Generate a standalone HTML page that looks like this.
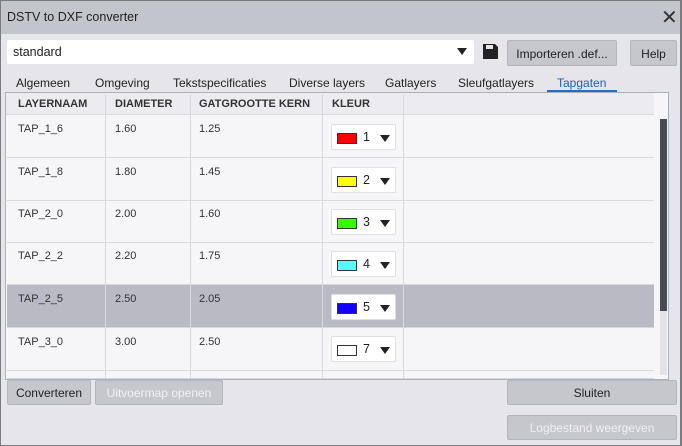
<!DOCTYPE html><html><head><style>
*{box-sizing:border-box;margin:0;padding:0}
body{width:682px;height:446px;overflow:hidden;font-family:"Liberation Sans",sans-serif;font-size:12px;color:#222;background:#7a7b80;position:relative}
.win{position:absolute;left:1px;top:1px;width:679px;height:444px;background:#e6e6ea}
.title{position:absolute;left:0;top:0;width:679px;height:33px;background:#c3c5cc}
.abs{position:absolute;white-space:nowrap}
.btn{position:absolute;background:#c6c7cd;border:1px solid #b5b6bc;border-radius:2px;text-align:center;font-size:12px;color:#222;white-space:nowrap}
.dis{color:#f0f0f2}
.th{position:absolute;top:93px;height:21px;font-size:11px;font-weight:bold;color:#333;padding-top:4px}
.row{position:absolute;left:6px;width:647px;height:43px;border-bottom:1px solid #d8d8de}
.vl{position:absolute;top:93px;height:285px;width:1px;background:#d8d8de}
.cell{position:absolute;font-size:11px;color:#333}
.sw{position:absolute;left:330px;width:65px;height:26px;background:#fff;border:1px solid #e0e0e4;border-radius:2px}
.sw i{position:absolute;left:5px;top:8px;width:20px;height:11px;border:1px solid #333}
.sw b{position:absolute;left:31px;top:5px;font-weight:normal;font-size:12.5px}
.sw s{position:absolute;left:48px;top:10px;border-left:5px solid transparent;border-right:5px solid transparent;border-top:7px solid #222}
</style></head><body><div class="win">
<div class="title"><div class="abs" style="left:6px;top:9px;font-size:12.5px">DSTV to DXF converter</div>
<div class="abs" style="left:660px;top:4px;font-size:20px;color:#333">✕</div></div>
<div class="abs" style="left:6px;top:39px;width:467px;height:24px;background:#fff;border-radius:2px"><div class="abs" style="left:6px;top:5px;font-size:12.5px">standard</div><div class="abs" style="left:450px;top:8px;border-left:5px solid transparent;border-right:5px solid transparent;border-top:7px solid #222"></div></div>
<svg class="abs" style="left:482px;top:43px" width="15" height="15" viewBox="0 0 15 15"><path d="M0 0H12L15 3V15H0Z" fill="#222"/><rect x="3" y="1" width="7" height="4" fill="#e6e6ea"/></svg>
<div class="btn" style="left:506px;top:39px;width:110px;height:26px;padding-top:6px">Importeren .def...</div>
<div class="btn" style="left:629px;top:39px;width:47px;height:26px;padding-top:6px">Help</div>
<div class="abs" style="top:75px;left:15px;font-size:12px;color:#222">
<span class="abs" style="left:0">Algemeen</span><span class="abs" style="left:79px">Omgeving</span><span class="abs" style="left:157px">Tekstspecificaties</span><span class="abs" style="left:273px">Diverse layers</span><span class="abs" style="left:369px">Gatlayers</span><span class="abs" style="left:442px">Sleufgatlayers</span><span class="abs" style="left:541px;color:#2060b0">Tapgaten</span></div>
<div class="abs" style="left:546px;top:89px;width:70px;height:2px;background:#2a6cc0"></div>
<div class="abs" style="left:4px;top:91px;width:664px;height:288px;background:#f6f6f9;border:1px solid #aab0bc"></div>
<div class="abs" style="left:5px;top:92px;width:648px;height:22px;background:#ececf0;border-bottom:1px solid #d8d8de"></div>
<div class="th" style="left:17px">LAYERNAAM</div><div class="th" style="left:114px">DIAMETER</div><div class="th" style="left:198px">GATGROOTTE KERN</div><div class="th" style="left:331px">KLEUR</div>
<div class="row" style="top:114px"></div><div class="row" style="top:157px"></div><div class="row" style="top:199px"></div><div class="row" style="top:241px"></div><div class="row" style="top:284px;background:#b9bac3"></div><div class="row" style="top:327px"></div><div class="row" style="top:370px;height:8px"></div>
<div class="vl" style="left:104px"></div><div class="vl" style="left:189px"></div><div class="vl" style="left:321px"></div><div class="vl" style="left:402px"></div>
<div class="cell" style="left:17px;top:122px">TAP_1_6</div><div class="cell" style="left:114px;top:122px">1.60</div><div class="cell" style="left:198px;top:122px">1.25</div>
<div class="cell" style="left:17px;top:165px">TAP_1_8</div><div class="cell" style="left:114px;top:165px">1.80</div><div class="cell" style="left:198px;top:165px">1.45</div>
<div class="cell" style="left:17px;top:207px">TAP_2_0</div><div class="cell" style="left:114px;top:207px">2.00</div><div class="cell" style="left:198px;top:207px">1.60</div>
<div class="cell" style="left:17px;top:249px">TAP_2_2</div><div class="cell" style="left:114px;top:249px">2.20</div><div class="cell" style="left:198px;top:249px">1.75</div>
<div class="cell" style="left:17px;top:292px">TAP_2_5</div><div class="cell" style="left:114px;top:292px">2.50</div><div class="cell" style="left:198px;top:292px">2.05</div>
<div class="cell" style="left:17px;top:335px">TAP_3_0</div><div class="cell" style="left:114px;top:335px">3.00</div><div class="cell" style="left:198px;top:335px">2.50</div>
<div class="sw" style="top:123px"><i style="background:#f00"></i><b>1</b><s></s></div>
<div class="sw" style="top:166px"><i style="background:#ff0"></i><b>2</b><s></s></div>
<div class="sw" style="top:208px"><i style="background:#3f0"></i><b>3</b><s></s></div>
<div class="sw" style="top:250px"><i style="background:#5ff"></i><b>4</b><s></s></div>
<div class="sw" style="top:293px"><i style="background:#10f"></i><b>5</b><s></s></div>
<div class="sw" style="top:335px"><i style="background:#fff"></i><b>7</b><s></s></div>
<div class="abs" style="left:659px;top:118px;width:7px;height:256px;background:#e4e4e8"></div>
<div class="abs" style="left:659px;top:118px;width:7px;height:192px;background:#4a4b50"></div>
<div class="btn" style="left:6px;top:379px;width:84px;height:25px;padding-top:5px">Converteren</div>
<div class="btn dis" style="left:94px;top:379px;width:128px;height:25px;padding-top:5px">Uitvoermap openen</div>
<div class="btn" style="left:506px;top:379px;width:170px;height:25px;padding-top:5px">Sluiten</div>
<div class="btn dis" style="left:506px;top:414px;width:170px;height:25px;padding-top:5px">Logbestand weergeven</div>
</div></body></html>
